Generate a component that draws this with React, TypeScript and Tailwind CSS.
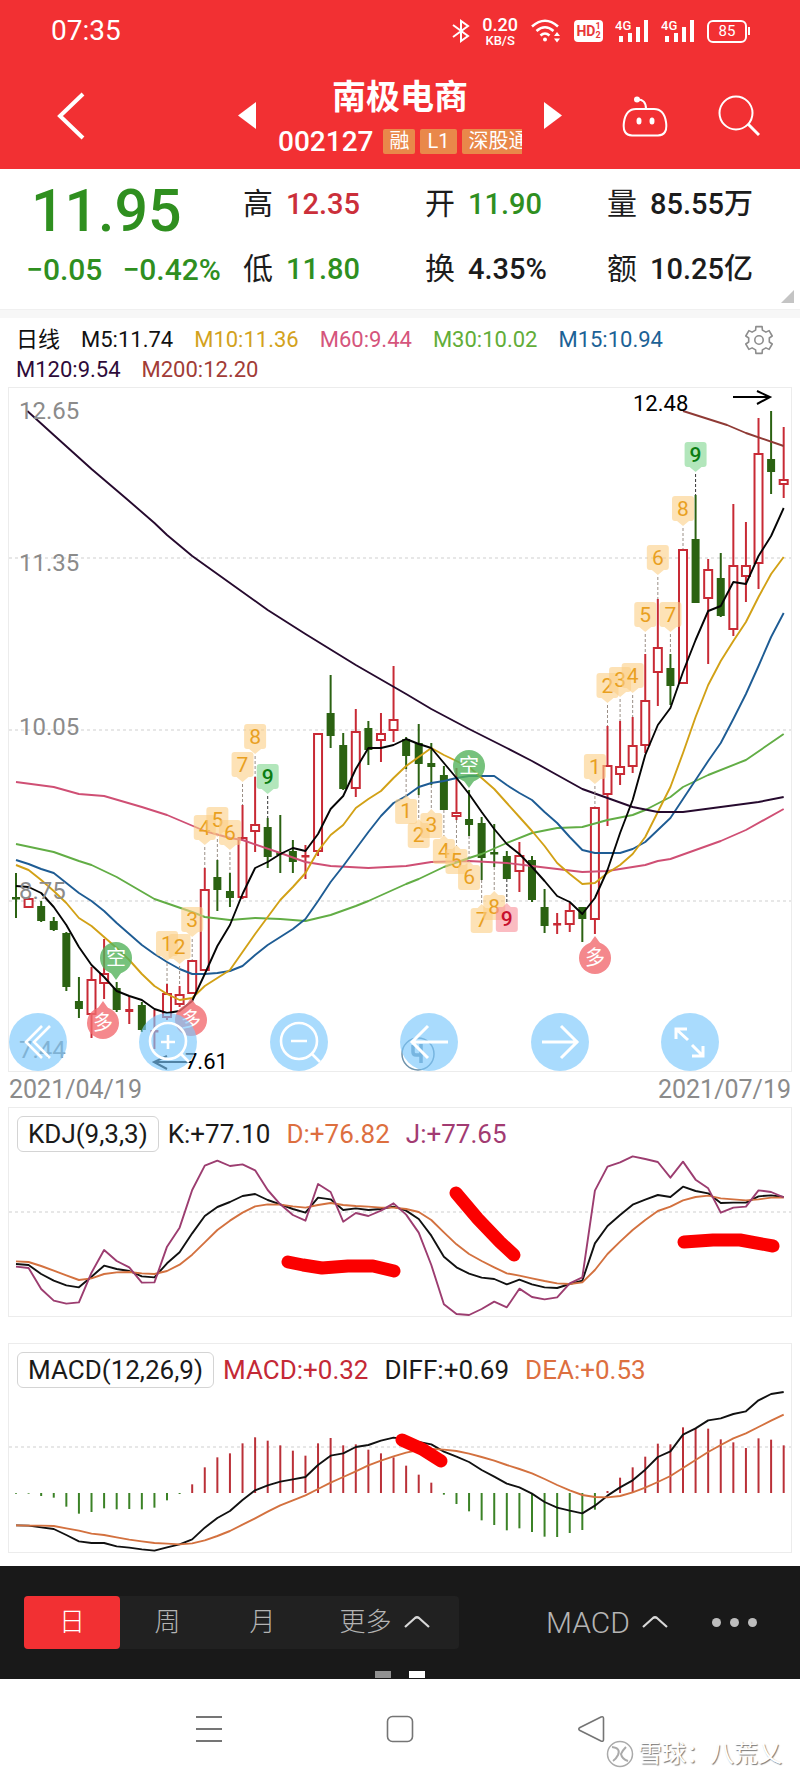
import React from "react";

type Candle = [string, number, number, number, number];
type Point = [number, number];

const STEP = 12.585;
const xAt = (i: number) => 16 + STEP * i;

// direction, high, body top, body bottom, low
const candles: Candle[] = [
  ["g", 873, 897, 899, 918],
  ["r", 897, 898, 908, 908],
  ["g", 901, 906, 921, 922],
  ["g", 917, 921, 930, 931],
  ["g", 932, 933, 987, 991],
  ["g", 977, 1001, 1009, 1018],
  ["r", 967, 979, 1015, 1038],
  ["r", 939, 973, 984, 999],
  ["g", 982, 988, 1010, 1012],
  ["r", 996, 1009, 1012, 1024],
  ["g", 1002, 1005, 1030, 1032],
  ["r", 1010, 1030, 1032, 1049],
  ["r", 984, 993, 1018, 1020],
  ["r", 986, 994, 1005, 1007],
  ["r", 960, 960, 994, 994],
  ["r", 868, 889, 971, 971],
  ["g", 860, 877, 890, 911],
  ["g", 873, 891, 898, 907],
  ["r", 805, 837, 898, 899],
  ["r", 777, 824, 832, 852],
  ["g", 818, 827, 857, 868],
  ["g", 815, 852, 855, 873],
  ["g", 840, 851, 862, 873],
  ["r", 845, 855, 857, 879],
  ["r", 733, 733, 852, 856],
  ["g", 675, 713, 736, 748],
  ["g", 733, 745, 789, 790],
  ["r", 709, 731, 789, 797],
  ["g", 721, 728, 750, 765],
  ["r", 713, 733, 741, 762],
  ["r", 666, 719, 731, 742],
  ["g", 737, 739, 756, 769],
  ["g", 724, 743, 764, 795],
  ["g", 743, 763, 767, 785],
  ["g", 766, 775, 810, 810],
  ["r", 768, 812, 817, 820],
  ["g", 790, 819, 825, 836],
  ["g", 817, 823, 858, 880],
  ["g", 824, 852, 854, 867],
  ["g", 851, 856, 879, 879],
  ["r", 842, 855, 872, 892],
  ["g", 856, 860, 900, 902],
  ["g", 889, 907, 926, 933],
  ["r", 913, 923, 925, 934],
  ["r", 903, 910, 925, 932],
  ["g", 907, 907, 919, 942],
  ["r", 807, 807, 920, 934],
  ["r", 726, 765, 795, 826],
  ["r", 721, 766, 775, 785],
  ["r", 717, 745, 767, 773],
  ["r", 654, 700, 746, 753],
  ["r", 599, 647, 673, 706],
  ["g", 654, 668, 686, 705],
  ["r", 549, 549, 684, 684],
  ["g", 495, 539, 603, 603],
  ["r", 559, 569, 599, 664],
  ["g", 553, 578, 616, 617],
  ["r", 504, 565, 630, 636],
  ["r", 522, 565, 577, 602],
  ["r", 418, 453, 564, 589],
  ["g", 411, 459, 472, 494],
  ["r", 427, 479, 485, 498],
];

const ma5 = [886, 887, 893, 907, 925, 947, 965, 977, 991, 996, 1000, 1009, 1013, 1011, 1001, 974, 946, 925, 894, 868, 862, 854, 848, 851, 834, 809, 796, 769, 748, 748, 745, 739, 744, 748, 763, 778, 794, 812, 829, 844, 854, 867, 881, 896, 902, 914, 898, 870, 833, 800, 755, 725, 708, 672, 640, 611, 606, 582, 584, 556, 536, 508];
const ma10 = [865, 870, 880, 891, 903, 918, 926, 937, 948, 960, 974, 986, 994, 1000, 998, 986, 978, 970, 952, 934, 917, 900, 887, 873, 851, 835, 825, 808, 799, 791, 778, 766, 757, 748, 755, 761, 767, 778, 789, 803, 817, 831, 846, 863, 874, 884, 883, 873, 865, 854, 837, 812, 787, 753, 717, 685, 661, 641, 622, 597, 574, 557];
const ma15 = [860, 864, 869, 873, 883, 893, 901, 911, 923, 934, 945, 954, 962, 969, 974, 974, 973, 971, 966, 955, 945, 937, 929, 919, 901, 882, 866, 849, 832, 816, 803, 796, 787, 783, 781, 778, 776, 776, 776, 785, 793, 800, 812, 823, 837, 850, 853, 853, 853, 849, 842, 830, 818, 799, 780, 761, 743, 719, 694, 666, 637, 613];
const ma30: Point[] = [[0, 844], [3, 852], [5, 861], [6, 865], [8, 877], [11, 899], [14, 912], [15, 917], [17, 920], [19, 918], [21, 919], [23, 921], [25, 915], [27, 906], [28, 901], [31, 884], [32, 879], [34, 867], [36, 858], [37, 854], [39, 843], [41, 833], [43, 828], [45, 827], [47, 820], [49, 815], [50, 810], [52, 797], [53, 787], [55, 775], [58, 760], [61, 734]];
const ma60: Point[] = [[0, 782], [3, 787], [5, 794], [7, 796], [10, 807], [12, 815], [15, 831], [17, 838], [18, 840], [21, 853], [23, 862], [25, 866], [28, 868], [31, 866], [33, 862], [36, 861], [39, 863], [41, 866], [43, 869], [45, 872], [47, 871], [50, 865], [51, 861], [52, 859], [54, 850], [56, 841], [58, 830], [61, 809]];
const ma120: Point[] = [[0.9, 411], [3, 435], [6, 469], [8.8, 499], [11, 523], [12, 535], [14, 556], [16, 574], [20, 610], [23, 634], [27, 665], [31, 694], [33, 709], [36, 729], [39, 748], [41, 761], [43, 775], [45, 789], [47, 798], [49, 807], [51, 812], [53, 812], [56, 807], [59, 802], [61, 797]];
const ma200: Point[] = [[53, 411], [56.5, 425], [58, 433], [61, 446]];

// indicator values are stored at three units per chart pixel
const kLine = [522, 525, 552, 572, 586, 592, 560, 527, 537, 543, 559, 562, 520, 487, 430, 378, 351, 336, 318, 312, 330, 343, 357, 368, 323, 328, 360, 355, 360, 357, 350, 362, 387, 437, 500, 532, 551, 563, 567, 583, 569, 583, 592, 594, 582, 572, 460, 408, 375, 344, 329, 315, 321, 290, 303, 310, 339, 338, 338, 319, 316, 321];
const dLine = [514, 516, 528, 542, 556, 570, 565, 552, 547, 546, 550, 552, 543, 524, 494, 457, 420, 392, 368, 349, 343, 344, 349, 353, 345, 339, 345, 348, 350, 353, 353, 357, 366, 390, 427, 463, 492, 513, 532, 550, 557, 565, 573, 580, 582, 577, 540, 492, 455, 420, 390, 363, 350, 331, 321, 317, 325, 328, 331, 328, 323, 323];
const jLine = [530, 534, 597, 632, 641, 637, 548, 480, 513, 532, 578, 577, 470, 413, 300, 227, 212, 228, 223, 241, 300, 343, 375, 392, 282, 306, 395, 369, 378, 362, 340, 374, 428, 525, 643, 672, 675, 657, 635, 652, 596, 621, 628, 622, 580, 562, 302, 230, 217, 199, 207, 216, 263, 215, 269, 295, 368, 353, 350, 301, 306, 322];
const diff = [586, 587, 592, 597, 615, 634, 639, 639, 649, 653, 658, 662, 652, 643, 628, 593, 564, 543, 510, 481, 466, 455, 448, 441, 405, 377, 370, 351, 345, 332, 323, 328, 336, 343, 365, 380, 396, 420, 440, 461, 472, 491, 516, 533, 542, 550, 527, 497, 472, 451, 419, 381, 364, 314, 295, 271, 265, 252, 244, 211, 192, 186];
const dea = [586, 587, 587, 588, 595, 602, 611, 615, 622, 629, 634, 639, 641, 643, 640, 631, 618, 603, 584, 565, 545, 526, 511, 496, 477, 458, 441, 424, 406, 392, 379, 368, 360, 357, 359, 363, 371, 381, 392, 405, 417, 430, 447, 465, 481, 495, 501, 502, 498, 487, 473, 456, 438, 414, 390, 366, 345, 325, 310, 291, 272, 254];
const histogram = [-2, -2, -9, -14, -41, -62, -57, -46, -49, -48, -49, -44, -22, -3, 26, 77, 107, 119, 149, 167, 157, 143, 127, 112, 149, 165, 143, 146, 130, 119, 107, 82, 55, 31, -5, -33, -55, -82, -96, -112, -106, -117, -131, -132, -120, -111, -50, 6, 46, 77, 109, 148, 146, 197, 194, 193, 161, 152, 135, 164, 160, 143];

// count badges: candle index, label, badge top
const badgesAbove: [number, string, number][] = [
  [12, "1", 931], [13, "2", 934], [14, "3", 907], [15, "4", 815], [16, "5", 807],
  [17, "6", 820], [18, "7", 752], [19, "8", 724], [20, "9", 764],
  [46, "1", 754], [47, "2", 673], [48, "3", 667], [49, "4", 663], [50, "5", 602],
  [51, "6", 545], [52, "7", 602], [53, "8", 496], [54, "9", 442],
];
const badgesBelow: [number, string, number][] = [
  [31, "1", 796], [32, "2", 820], [33, "3", 810], [34, "4", 836], [35, "5", 846],
  [36, "6", 862], [37, "7", 905], [38, "8", 892], [39, "9", 904],
];

const fromValues = (values: number[], scale = 1) =>
  values.map((v, i) => `${xAt(i)},${v / scale}`).join(" ");
const fromPoints = (points: Point[]) => points.map(([i, y]) => `${xAt(i)},${y}`).join(" ");

const Line = ({ points, color }: { points: string; color: string }) => (
  <polyline points={points} fill="none" stroke={color} strokeWidth="1.9" strokeLinejoin="round" />
);

const GridLine = ({ y }: { y: number }) => (
  <line x1="9" x2="791" y1={y} y2={y} stroke="#cfcfcf" strokeWidth="1" strokeDasharray="3 3" />
);

const Badge = ({ index, label, top, below }: { index: number; label: string; top: number; below?: boolean }) => {
  const x = xAt(index);
  const nine = label === "9";
  const fill = !nine ? "#fbcf85" : below ? "#f9909a" : "#7fd58e";
  const color = !nine ? "#e9a01f" : below ? "#c8102e" : "#0b7d12";
  const [, high, , , low] = candles[index];
  return (
    <g>
      <line
        x1={x}
        x2={x}
        y1={below ? low : top + 32}
        y2={below ? top : high}
        stroke={nine ? "#333" : "#9a8f86"}
        strokeWidth="1"
        strokeDasharray="3 2"
      />
      <g transform={`translate(${x} ${top})`}>
        <path
          d={
            below
              ? "M-8 3H-4L0 -1L4 3H8Q11 3 11 6V25Q11 28 8 28H-8Q-11 28 -11 25V6Q-11 3 -8 3Z"
              : "M-8 0H8Q11 0 11 3V22Q11 25 8 25H6L0 30L-6 25H-8Q-11 25 -11 22V3Q-11 0 -8 0Z"
          }
          fill={fill}
          fillOpacity="0.6"
        />
        <text x="0" y={below ? 22 : 20} textAnchor="middle" fontSize="21" fontWeight={nine ? 500 : 400} fill={color}>
          {label}
        </text>
      </g>
    </g>
  );
};

const Pin = ({ x, y, label, up }: { x: number; y: number; label: string; up?: boolean }) => (
  <g transform={`translate(${x} ${y})`}>
    <g fill={up ? "#f26b70" : "#55b35c"} opacity="0.8">
      <circle r="16" />
      <path d={up ? "M-5 -15L0 -22L5 -15Z" : "M-5 15L0 22L5 15Z"} />
    </g>
    <text y="7" textAnchor="middle" fontSize="20" fill="#fff">
      {label}
    </text>
  </g>
);

const StatusBar = () => (
  <div className="flex h-[62px] items-center justify-between pr-[50px] pl-[51px] text-white">
    <span className="text-[28px] leading-8">07:35</span>
    <div className="flex items-center gap-3">
      <svg className="h-6 w-[18px]" viewBox="0 0 18 24" fill="none" stroke="currentColor" strokeWidth="2">
        <path d="M1 6L16 17L9 22V2L16 7L1 18" />
      </svg>
      <div className="flex flex-col items-center font-medium">
        <span className="text-[18px] leading-[18px]">0.20</span>
        <span className="text-[13px] leading-[13px]">KB/S</span>
      </div>
      <svg className="h-6 w-8" viewBox="0 0 32 24" fill="none" stroke="currentColor" strokeWidth="2.6">
        <path d="M2 7.500Q15 -4 28 7.500" />
        <path d="M6.500 12Q15 4.500 23.500 12" />
        <path d="M10.500 16.500Q15 12.500 19.500 16.500" />
        <circle cx="15" cy="20.500" r="2" fill="currentColor" stroke="none" />
        <path d="M24 17L27 13L30 17ZM24 19.500L27 23.500L30 19.500Z" fill="currentColor" stroke="none" />
      </svg>
      <div className="flex h-[22px] w-[29px] items-center justify-center rounded bg-white text-[#e8383b]">
        <span className="text-[14px] leading-none font-bold">HD</span>
        <span className="flex flex-col text-[9px] leading-[9px] font-bold">
          <span>1</span>
          <span>2</span>
        </span>
      </div>
      <Signal />
      <Signal />
      <div className="flex items-center">
        <div className="flex h-[23px] w-10 items-center justify-center rounded-md border-2 border-white text-[15px] leading-none">
          85
        </div>
        <div className="ml-px h-2 w-[2px] bg-white" />
      </div>
    </div>
  </div>
);

const Signal = () => (
  <svg className="h-6 w-[34px]" viewBox="0 0 34 24" fill="#fff">
    <text x="0" y="11" fontSize="13" fontWeight="500">4G</text>
    <rect x="4" y="17" width="4" height="6" />
    <rect x="13" y="14" width="4" height="9" />
    <rect x="21" y="8" width="4" height="15" />
    <rect x="29" y="1" width="4" height="22" />
  </svg>
);

const Header = () => (
  <header className="bg-[#f23033] text-white">
    <StatusBar />
    <div className="grid h-[107px] grid-cols-[1fr_auto_1fr] items-center px-10">
      <button type="button" aria-label="返回" className="ml-4 justify-self-start">
        <svg className="h-[50px] w-8" viewBox="0 0 32 50" fill="none" stroke="currentColor" strokeWidth="4">
          <path d="M27 3L4 25L27 47" />
        </svg>
      </button>
      <div className="flex items-center gap-[22px]">
        <button type="button" aria-label="上一只">
          <svg className="h-[27px] w-[18px]" viewBox="0 0 18 27" fill="currentColor">
            <path d="M18 0V27L0 13.500Z" />
          </svg>
        </button>
        <div className="w-[244px] pt-1">
          <h1 className="text-center text-[34px] leading-10 font-semibold">南极电商</h1>
          <div className="mt-2 flex h-[34px] items-center gap-[5px] overflow-hidden whitespace-nowrap">
            <span className="mr-[5px] text-[28px] font-medium">002127</span>
            <span className="rounded-xs bg-[#e9884a] px-[6px] text-[20px] leading-[25px]">融</span>
            <span className="rounded-xs bg-[#e9884a] px-[7px] text-[20px] leading-[25px]">L1</span>
            <span className="rounded-xs bg-[#e9884a] px-[7px] text-[20px] leading-[25px]">深股通</span>
          </div>
        </div>
        <button type="button" aria-label="下一只">
          <svg className="h-[27px] w-[18px]" viewBox="0 0 18 27" fill="currentColor">
            <path d="M0 0V27L18 13.500Z" />
          </svg>
        </button>
      </div>
      <div className="flex items-center gap-[50px] justify-self-end">
        <button type="button" aria-label="助手">
          <svg className="h-[42px] w-[46px]" viewBox="0 0 46 42" fill="none" stroke="currentColor" strokeWidth="2">
            <path d="M14 14H32Q42 14 44 27Q46 40 36 40.500H10Q0 40 2 27Q4 14 14 14Z" />
            <path d="M15 4.500Q24 4 24 14" />
            <circle cx="15" cy="4.500" r="3" fill="currentColor" stroke="none" />
            <ellipse cx="17" cy="26" rx="2.500" ry="3.500" fill="currentColor" stroke="none" />
            <ellipse cx="30" cy="26" rx="2.500" ry="3.500" fill="currentColor" stroke="none" />
          </svg>
        </button>
        <button type="button" aria-label="搜索">
          <svg className="h-[42px] w-[42px]" viewBox="0 0 42 42" fill="none" stroke="currentColor" strokeWidth="2">
            <circle cx="18" cy="18" r="16.500" />
            <path d="M30 29L41 40" strokeWidth="3" />
          </svg>
        </button>
      </div>
    </div>
  </header>
);

const quotes = [
  { label: "高", value: "12.35", color: "text-[#cb2f3a]" },
  { label: "开", value: "11.90", color: "text-[#2f8f1f]" },
  { label: "量", value: "85.55万", color: "text-[#1c1c1c]" },
  { label: "低", value: "11.80", color: "text-[#2f8f1f]" },
  { label: "换", value: "4.35%", color: "text-[#1c1c1c]" },
  { label: "额", value: "10.25亿", color: "text-[#1c1c1c]" },
];

const Quote = () => (
  <section className="relative flex h-[141px] border-b border-[#f0f0f0] bg-white pt-[10px] pr-[10px]">
    <div className="w-[243px] shrink-0 text-[#2f8f1f]">
      <div className="pl-[31px] text-[59px] leading-[64px] font-medium">11.95</div>
      <div className="flex gap-5 pl-[26px] text-[30px] leading-[54px] font-medium whitespace-nowrap">
        <span>−0.05</span>
        <span>−0.42%</span>
      </div>
    </div>
    <dl className="grid h-[130px] flex-1 grid-cols-3 pr-px">
      {quotes.map((q) => (
        <div key={q.label} className="flex items-start gap-[13px] leading-[50px] whitespace-nowrap">
          <dt className="text-[30px] text-[#1c1c1c]">{q.label}</dt>
          <dd className={`text-[29px] font-medium ${q.color}`}>{q.value}</dd>
        </div>
      ))}
    </dl>
    <svg className="absolute right-[6px] bottom-[6px] h-[13px] w-[13px]" viewBox="0 0 13 13">
      <path d="M13 0V13H0Z" fill="#c4c4c4" />
    </svg>
  </section>
);

const gearPath = Array.from({ length: 6 }, (_, i) => {
  const at = (deg: number, r: number) => {
    const a = ((i * 60 - 90 + deg) * Math.PI) / 180;
    return `${(15 + Math.cos(a) * r).toFixed(1)} ${(15 + Math.sin(a) * r).toFixed(1)}`;
  };
  return `${i ? "L" : "M"}${at(-19, 10.5)}L${at(-13, 13.8)}L${at(13, 13.8)}L${at(19, 10.5)}`;
}).join("");

const legend = [
  { text: "日线", color: "text-[#111]" },
  { text: "M5:11.74", color: "text-[#111]" },
  { text: "M10:11.36", color: "text-[#d3a21c]" },
  { text: "M60:9.44", color: "text-[#d5557c]" },
  { text: "M30:10.02", color: "text-[#62ad38]" },
  { text: "M15:10.94", color: "text-[#1c6296]" },
  { text: "M120:9.54", color: "text-[#2e0b3a]" },
  { text: "M200:12.20", color: "text-[#a23c37]" },
];

const Legend = () => (
  <div className="flex items-start justify-between pt-[7px] pr-[26px] pb-[2px] pl-4">
    <div className="flex flex-1 flex-wrap gap-x-[21px] text-[22px] leading-[30px]">
      {legend.map((l) => (
        <span key={l.text} className={l.color}>
          {l.text}
        </span>
      ))}
    </div>
    <button type="button" aria-label="设置">
      <svg className="h-[30px] w-[30px]" viewBox="0 0 30 30" fill="none" stroke="#8d8d8d" strokeWidth="1.6" strokeLinejoin="round">
        <path d={gearPath + "Z"} />
        <circle cx="15" cy="15" r="4.200" />
      </svg>
    </button>
  </div>
);

const RoundButton = ({ label, children }: { label: string; children: React.ReactNode }) => (
  <button type="button" aria-label={label} className="h-[58px] w-[58px] rounded-full bg-[#7bc8fc]/65">
    <svg viewBox="0 0 58 58" fill="none" stroke="#fff" strokeWidth="2.6">
      {children}
    </svg>
  </button>
);

const PriceChart = () => (
  <div className="relative mx-2 border border-[#ececec]">
    <svg className="block w-full" viewBox="9 388 782 683">
      <GridLine y={558} />
      <GridLine y={730} />
      <GridLine y={901} />
      {candles.map(([dir, high, top, bottom, low], i) => {
        const x = xAt(i);
        const red = dir === "r";
        const color = red ? "#c82a35" : "#2b6212";
        const hollow = red && bottom - top > 3;
        return (
          <g key={i} stroke={color} strokeWidth="2">
            <line x1={x} x2={x} y1={high} y2={top} />
            <line x1={x} x2={x} y1={bottom} y2={low} />
            <rect
              x={x - (hollow ? 4 : 3)}
              y={top + 1}
              width={hollow ? 8 : 6}
              height={Math.max(bottom - top - 2, 0.5)}
              fill={hollow ? "#fff" : color}
            />
          </g>
        );
      })}
      <Line points={fromPoints(ma60)} color="#cf4f74" />
      <Line points={fromPoints(ma30)} color="#62ad45" />
      <Line points={fromValues(ma15)} color="#1e5c94" />
      <Line points={fromValues(ma10)} color="#d2a116" />
      <Line points={fromPoints(ma200)} color="#8f3a35" />
      <Line points={fromPoints(ma120)} color="#260a2e" />
      <Line points={fromValues(ma5)} color="#050505" />
      {badgesAbove.map(([index, label, top]) => (
        <Badge key={index} index={index} label={label} top={top} />
      ))}
      {badgesBelow.map(([index, label, top]) => (
        <Badge key={index} index={index} label={label} top={top} below />
      ))}
      <Pin x={116} y={958} label="空" />
      <Pin x={469} y={766} label="空" />
      <Pin x={103} y={1023} label="多" up />
      <Pin x={191} y={1020} label="多" up />
      <Pin x={595} y={958} label="多" up />
      <g fontSize="24" fill="#8b8b8b">
        <text x="19" y="419">12.65</text>
        <text x="19" y="571">11.35</text>
        <text x="19" y="735">10.05</text>
        <text x="19" y="899">8.75</text>
        <text x="19" y="1058">7.44</text>
      </g>
      <g fontSize="22" fill="#000">
        <text x="633" y="411">12.48</text>
        <text x="185" y="1069">7.61</text>
      </g>
      <g fill="none" stroke="#000" strokeWidth="2">
        <path d="M733 397H770M757 391L770 397L757 404" />
        <path d="M192 1062H154M167 1056L154 1062L167 1069" />
      </g>
      <g fill="none" stroke="#6f93ab">
        <circle cx="418" cy="1054" r="16" strokeWidth="1.500" />
        <path d="M413 1045V1052Q413 1055 416 1055H421M421 1044V1063" strokeWidth="3.500" />
      </g>
    </svg>
    <div className="absolute right-[72px] bottom-0 left-0 flex justify-between">
      <RoundButton label="最左">
        <path d="M33 13L17 29L33 45M41 13L25 29L41 45" />
      </RoundButton>
      <RoundButton label="放大">
        <circle cx="29" cy="28" r="18" />
        <path d="M42 41L50 49M22 29H36M29 22V36" />
      </RoundButton>
      <RoundButton label="缩小">
        <circle cx="29" cy="28" r="18" />
        <path d="M42 41L50 49M21 28H37" />
      </RoundButton>
      <RoundButton label="左移">
        <path d="M48 29H12M28 13L12 29L28 45" strokeWidth="3" />
      </RoundButton>
      <RoundButton label="右移">
        <path d="M11 29H47M30 13L46 29L30 45" strokeWidth="3" />
      </RoundButton>
      <RoundButton label="全屏">
        <path d="M15 26V16H26M15 16L27 27M31 32L42 43M42 33V43H31" strokeWidth="3" />
      </RoundButton>
    </div>
  </div>
);

const PanelHeader = ({ name, items }: { name: string; items: { text: string; color: string }[] }) => (
  <div className="flex items-center gap-4 pt-2 pl-2 text-[26px] leading-[34px] whitespace-nowrap">
    <button type="button" className="-mr-[7px] rounded-md border border-[#d4d4d4] px-[10px] text-[#1a1a1a]">
      {name}
    </button>
    {items.map((item) => (
      <span key={item.text} className={item.color}>
        {item.text}
      </span>
    ))}
  </div>
);

const KdjPanel = () => (
  <div className="mx-2 border border-[#ececec]">
    <PanelHeader
      name="KDJ(9,3,3)"
      items={[
        { text: "K:+77.10", color: "text-[#1a1a1a]" },
        { text: "D:+76.82", color: "text-[#dd6f3f]" },
        { text: "J:+77.65", color: "text-[#a23b72]" },
      ]}
    />
    <svg className="block w-full" viewBox="9 62 782 164">
      <GridLine y={122} />
      <Line points={fromValues(kLine, 3)} color="#111" />
      <Line points={fromValues(dLine, 3)} color="#d3713f" />
      <Line points={fromValues(jLine, 3)} color="#9c3d70" />
      <g fill="none" stroke="#fb0000" strokeWidth="13" strokeLinecap="round" strokeLinejoin="round">
        <path d="M288 172L303 175L322 178L348 176L373 176L394 181" />
        <path d="M456 103L478 129L500 152L514 165" />
        <path d="M684 152L713 150L740 150L773 156" />
      </g>
    </svg>
  </div>
);

const MacdPanel = () => (
  <div className="mx-2 mt-[26px] border border-[#ececec]">
    <PanelHeader
      name="MACD(12,26,9)"
      items={[
        { text: "MACD:+0.32", color: "text-[#c42936]" },
        { text: "DIFF:+0.69", color: "text-[#1a1a1a]" },
        { text: "DEA:+0.53", color: "text-[#dd6f3f]" },
      ]}
    />
    <svg className="block w-full" viewBox="9 58 782 164">
      <GridLine y={117} />
      {histogram.map((h, i) => (
        <line
          key={i}
          x1={xAt(i)}
          x2={xAt(i)}
          y1="163"
          y2={163 - h / 3}
          stroke={h > 0 ? "#ba3038" : "#3b8226"}
          strokeWidth="2"
        />
      ))}
      <Line points={fromValues(diff, 3)} color="#111" />
      <Line points={fromValues(dea, 3)} color="#d3713f" />
      <path d="M402 110L422 119L441 131" fill="none" stroke="#fb0000" strokeWidth="13" strokeLinecap="round" />
    </svg>
  </div>
);

const Caret = () => (
  <svg className="h-3 w-[26px]" viewBox="0 0 26 12" fill="none" stroke="#d8d8d8" strokeWidth="2.2">
    <path d="M1 11L11 2Q13 0.500 15 2L25 11" />
  </svg>
);

const Toolbar = () => (
  <div className="relative mt-[13px] flex h-[113px] items-center justify-between bg-[#191919] pr-[43px] pb-[1px] pl-6 text-[26px] font-light text-[#b4b4b4]">
    <div className="flex h-[53px] rounded bg-[#212121]">
      <button type="button" className="w-24 rounded bg-[#f23033] text-white">日</button>
      <button type="button" className="w-[95px]">周</button>
      <button type="button" className="w-[95px]">月</button>
      <button type="button" className="flex w-[149px] items-center justify-center gap-3">
        更多
        <Caret />
      </button>
    </div>
    <div className="flex items-center gap-11">
      <button type="button" className="flex items-center gap-3 text-[30px]">
        MACD
        <Caret />
      </button>
      <button type="button" aria-label="更多选项" className="flex gap-[9px]">
        <span className="h-[9px] w-[9px] rounded-full bg-[#bdbdbd]" />
        <span className="h-[9px] w-[9px] rounded-full bg-[#bdbdbd]" />
        <span className="h-[9px] w-[9px] rounded-full bg-[#bdbdbd]" />
      </button>
    </div>
    <div className="absolute inset-x-0 bottom-[1px] flex justify-center gap-[18px]">
      <span className="h-[7px] w-4 bg-[#919191]" />
      <span className="h-[7px] w-4 bg-white" />
    </div>
  </div>
);

const SystemNav = () => (
  <nav className="relative flex h-[99px] items-center justify-center gap-[163px] bg-white">
    <button type="button" aria-label="菜单">
      <svg className="h-7 w-7" viewBox="0 0 28 28" fill="none" stroke="#757575" strokeWidth="1.8">
        <path d="M1 2H27M1 14H27M1 26H27" />
      </svg>
    </button>
    <button type="button" aria-label="主页">
      <svg className="h-7 w-7" viewBox="0 0 28 28" fill="none" stroke="#757575" strokeWidth="1.600">
        <rect x="1.500" y="1.500" width="25" height="25" rx="5" />
      </svg>
    </button>
    <button type="button" aria-label="后退">
      <svg className="h-7 w-7" viewBox="0 0 28 28" fill="none" stroke="#757575" strokeWidth="1.600">
        <path d="M24 2Q26.500 1 26.500 3.500V24.500Q26.500 27 24 26L3 15.500Q0.500 14 3 12.500Z" />
      </svg>
    </button>
    <div className="absolute right-[18px] bottom-2 flex items-center gap-1">
      <svg className="h-7 w-7" viewBox="0 0 28 28" fill="none" stroke="#aaa" strokeWidth="1.500">
        <circle cx="14" cy="14" r="12.500" />
        <path d="M6 7Q15 8 12 15Q10 19 7 21M20 7Q16 11 15 14Q16 19 22 21" strokeWidth="2" />
      </svg>
      <span className="text-[24px] leading-8 text-white [text-shadow:1px_1px_1px_#777]">雪球：八荒乂</span>
    </div>
  </nav>
);

export default function App() {
  return (
    <div className="bg-white font-['Roboto','Noto_Sans_CJK_SC',sans-serif]">
      <Header />
      <Quote />
      <div className="h-2 bg-[#f7f7f7]" />
      <main>
        <Legend />
        <PriceChart />
        <div className="flex items-center justify-between px-[9px] text-[25px] leading-[35px] text-[#8b8b8b]">
          <span>2021/04/19</span>
          <span>2021/07/19</span>
        </div>
        <KdjPanel />
        <MacdPanel />
      </main>
      <Toolbar />
      <SystemNav />
    </div>
  );
}
